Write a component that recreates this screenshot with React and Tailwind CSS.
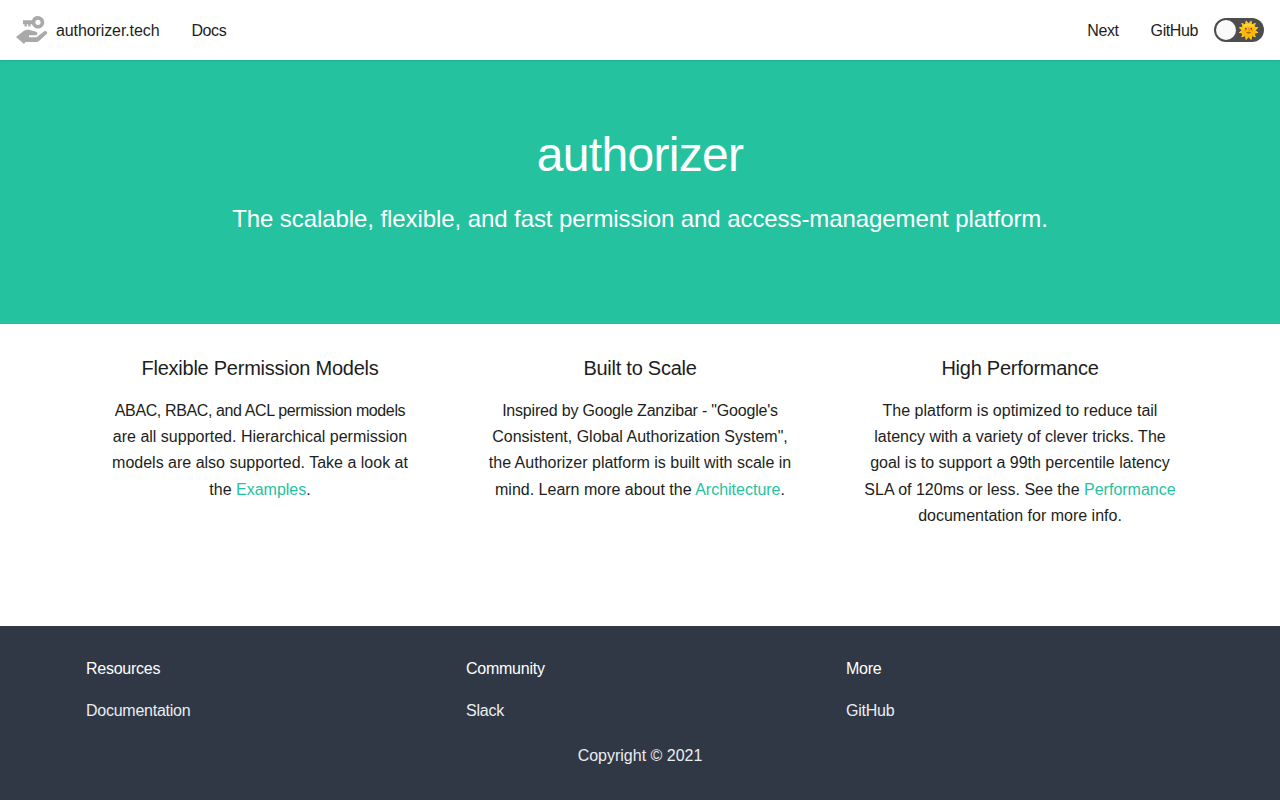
import React from 'react'

const Logo = () => (
  <svg width="32" height="32" viewBox="0 0 32 32" fill="#a9a9a9">
    <path fillRule="evenodd" d="M22 2a6.300 6.300 0 1 1-6 8.300h-1.500v2.200h-2.300v-2.200h-1.400v2.200H8.500v-2.200H7V6.200h9A6.300 6.300 0 0 1 22 2zm0 3.700a2.600 2.600 0 1 0 0 5.200 2.600 2.600 0 0 0 0-5.200z" />
    <path d="M0 23l7-5.500c2.200-1.700 4.400-2 6.700-1.400l6.300 1.600c2 .6 1.700 3.600-.5 3.600h-6.500v2h7.500l7.800-6c1.900-1.200 3.900 1.100 2.300 2.800l-7.600 7c-.8.700-1.700 1-2.700 1H9.500L8 30 0 23z" />
  </svg>
)

const link = 'text-[#25c2a0]'

const features = [
  {
    title: 'Flexible Permission Models',
    body: (
      <>
        <span className="tracking-[-0.38px]">ABAC, RBAC, and ACL permission models</span><br />
        are all supported. Hierarchical permission<br />
        models are also supported. Take a look at<br />
        the <a href="#" className={link}>Examples</a>.
      </>
    ),
  },
  {
    title: 'Built to Scale',
    body: (
      <>
        <span className="tracking-[-0.2px]">Inspired by Google Zanzibar - "Google's</span><br />
        Consistent, Global Authorization System",<br />
        the Authorizer platform is built with scale in<br />
        mind. Learn more about the <a href="#" className={link}>Architecture</a>.
      </>
    ),
  },
  {
    title: 'High Performance',
    body: (
      <>
        The platform is optimized to reduce tail<br />
        latency with a variety of clever tricks. The<br />
        goal is to support a 99th percentile latency<br />
        SLA of 120ms or less. See the <a href="#" className={link}>Performance</a><br />
        documentation for more info.
      </>
    ),
  },
]

const footerCols = [
  ['Resources', 'Documentation'],
  ['Community', 'Slack'],
  ['More', 'GitHub'],
]

const App = () => {
  return (
    <div className="min-h-screen flex flex-col bg-white text-[#1c1e21] text-base font-['Liberation_Sans',sans-serif]">
      {/* Navbar */}
      <nav className="relative z-10 h-[60px] flex items-center justify-between px-4 bg-white shadow-[0_1px_2px_0_rgba(0,0,0,0.1)]">
        <div className="flex items-center">
          <a href="#" className="flex items-center gap-2 mr-8">
            <Logo />
            <span className="tracking-[-0.1px] pt-px">authorizer.tech</span>
          </a>
          <a href="#" className="tracking-[-0.4px] pt-px">Docs</a>
        </div>
        <div className="flex items-center">
          <a href="#" className="mr-8 tracking-[-0.4px] pt-px">Next</a>
          <a href="#" className="mr-4 tracking-[-0.4px] pt-px">GitHub</a>
          <div className="w-[50px] h-6 rounded-full bg-[#4d4d4d] relative flex items-center justify-end pr-[5px]">
            <span className="text-[17px] leading-none">🌞</span>
            <div className="absolute left-[2px] top-[2px] w-5 h-5 rounded-full bg-[#fafafa]" />
          </div>
        </div>
      </nav>

      {/* Hero */}
      <header className="h-[264px] bg-[#25c2a0] text-white text-center flex flex-col items-center pt-16">
        <h1 className="text-[48px] leading-[1.25] mb-[17px] tracking-[-0.7px] mt-px">authorizer</h1>
        <p className="text-[24px] leading-[1.4] tracking-[-0.08px]">The scalable, flexible, and fast permission and access-management platform.</p>
      </header>

      {/* Features */}
      <main className="h-[302px] flex justify-center pt-8">
        <div className="w-[1140px] grid grid-cols-3">
          {features.map((f) => (
            <div key={f.title} className="px-4 text-center">
              <h3 className="text-[20px] leading-[1.25] mb-[16.5px] font-normal tracking-[-0.25px]">{f.title}</h3>
              <p className="text-base leading-[1.65] whitespace-nowrap">{f.body}</p>
            </div>
          ))}
        </div>
      </main>

      {/* Footer */}
      <footer className="flex-1 bg-[#303846] text-[#ebedf0] pt-[33px] flex flex-col items-center">
        <div className="w-[1140px] grid grid-cols-3">
          {footerCols.map(([title, href]) => (
            <div key={title} className="px-4 tracking-[-0.25px]">
              <h4 className="text-white leading-5 mb-[22px]">{title}</h4>
              <a href="#" className="block leading-5">{href}</a>
            </div>
          ))}
        </div>
        <p className="mt-[25px] leading-5 text-center">Copyright © 2021</p>
      </footer>
    </div>
  )
}

export default App
